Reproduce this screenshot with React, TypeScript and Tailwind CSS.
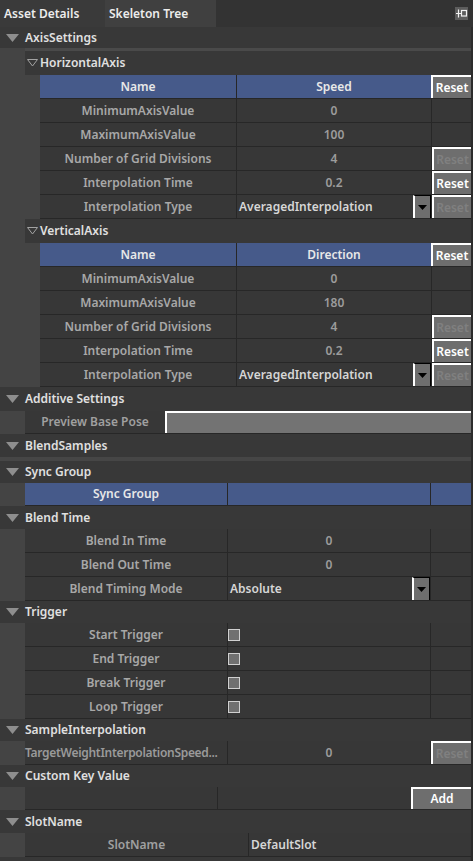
import React from 'react';

const Tri = () => (
  <svg width="13" height="8" viewBox="0 0 13 8">
    <polygon points="0,0 13,0 6.5,8" fill="#8e8e8e" />
  </svg>
);

const SubTri = () => (
  <svg width="11" height="8" viewBox="0 0 11 8">
    <polygon points="0.5,0.5 10.5,0.5 5.5,7" fill="none" stroke="#a3a3a3" />
  </svg>
);

const DockIcon = () => (
  <svg width="13" height="13" viewBox="0 0 13 13">
    <rect width="13" height="13" fill="#5d5d5d" />
    <path d="M3.5 2.5v8M1 6.5h6" stroke="#f2f2f2" strokeWidth="1.2" />
    <rect x="6.5" y="3.5" width="5" height="5.5" fill="none" stroke="#f2f2f2" strokeWidth="1.2" />
  </svg>
);

const Header = ({ title, h = 'h-[23px]' }: { title: string; h?: string }) => (
  <div className={`${h} flex items-center shrink-0`}>
    <div className="w-[25px] flex justify-center">
      <Tri />
    </div>
    <span className="text-[#e0e0e0] font-semibold">{title}</span>
  </div>
);

const ResetBtn = ({ disabled }: { disabled?: boolean }) => (
  <div
    className={`h-full w-full bg-[#6e6e6e] border-l-2 border-t-2 border-white flex items-center justify-center font-semibold ${
      disabled ? 'text-[#808080]' : 'text-white'
    }`}
  >
    Reset
  </div>
);

const Dropdown = () => (
  <div className="w-[18px] h-full bg-[#6e6e6e] border-l-2 border-l-white border-t border-t-black border-r border-r-black flex items-center justify-center">
    <svg width="9" height="5" viewBox="0 0 9 5">
      <polygon points="0,0 9,0 4.5,5" fill="#000" />
    </svg>
  </div>
);

type AxisRow = { label: string; value: string; reset?: 'on' | 'off'; dropdown?: boolean };

const AxisTable = ({ head, rows }: { head: string; rows: AxisRow[] }) => (
  <div className="flex">
    <div className="w-[15px] bg-[#444444]" />
    <div className="flex-1 flex flex-col">
      <div className="h-[24px] flex border-b border-[#272727]">
        <div className="w-[196px] bg-[#465a8a] flex items-center justify-center text-[#e8e8e8] font-semibold">Name</div>
        <div className="w-[195px] bg-[#465a8a] border-l border-[#272727] flex items-center justify-center text-[#e8e8e8] font-semibold">
          {head}
        </div>
        <div className="w-[40px]">
          <ResetBtn />
        </div>
      </div>
      {rows.map((r) => (
        <div key={r.label} className="h-[24px] flex border-b border-[#272727] bg-[#373737]">
          <div className="w-[196px] flex items-center justify-center text-[#a8a8a8] font-semibold">{r.label}</div>
          <div className="w-[195px] border-l border-[#272727] flex items-center">
            {r.dropdown ? (
              <div className="flex-1 h-full flex items-center justify-between pl-[2px]">
                <span className="text-[#d6d6d6] font-semibold">{r.value}</span>
                <Dropdown />
              </div>
            ) : (
              <span className="flex-1 text-center text-[#9c9c9c] font-semibold">{r.value}</span>
            )}
          </div>
          <div className="w-[40px] border-l border-[#272727]">
            {r.reset === 'on' && <ResetBtn />}
            {r.reset === 'off' && <ResetBtn disabled />}
          </div>
        </div>
      ))}
    </div>
  </div>
);

const SubHeader = ({ title }: { title: string }) => (
  <div className="h-[24px] flex items-center pl-[2px] bg-[#383838]">
    <SubTri />
    <span className="ml-[2px] text-[#e0e0e0] font-semibold">{title}</span>
  </div>
);

const Body = ({ children }: { children: React.ReactNode }) => (
  <div className="flex shrink-0">
    <div className="w-[25px] bg-[#444444]" />
    <div className="flex-1 flex flex-col">{children}</div>
  </div>
);

const axisRows = (max: string): AxisRow[] => [
  { label: 'MinimumAxisValue', value: '0' },
  { label: 'MaximumAxisValue', value: max },
  { label: 'Number of Grid Divisions', value: '4', reset: 'off' },
  { label: 'Interpolation Time', value: '0.2', reset: 'on' },
  { label: 'Interpolation Type', value: 'AveragedInterpolation', reset: 'off', dropdown: true },
];

const Row3 = ({
  label,
  children,
  last,
  left,
}: {
  label: string;
  children?: React.ReactNode;
  last?: React.ReactNode;
  left?: boolean;
}) => (
  <div className="h-[24px] flex border-b border-[#272727] bg-[#373737]">
    {left ? (
      <div className="w-[202px] flex items-center">
        <span className="whitespace-nowrap tracking-[-0.3px] text-[#9a9a9a] font-semibold">{label}</span>
      </div>
    ) : (
      <div className="w-[202px] flex items-center justify-center text-[#a8a8a8] font-semibold">{label}</div>
    )}
    <div className="w-[203px] border-l border-[#272727] flex items-center">{children}</div>
    <div className="w-[41px] border-l border-[#272727]">{last}</div>
  </div>
);

export default function App() {
  return (
    <div className="w-[473px] h-[861px] overflow-hidden bg-[#383838] flex flex-col text-[12px] leading-none font-['Noto_Sans',sans-serif]">
      {/* tab bar */}
      <div className="h-[27px] flex items-center bg-[#333333] shrink-0">
        <div className="w-[105px] h-full bg-[#3a3a3a] flex items-center pl-[4px] text-[#ececec] font-semibold">Asset Details</div>
        <div className="w-[111px] h-full bg-[#404040] flex items-center pl-[4px] text-[#ececec] font-semibold">Skeleton Tree</div>
        <div className="flex-1" />
        <div className="mr-[5px]">
          <DockIcon />
        </div>
      </div>

      <div className="flex flex-1">
        <div className="w-[471px] flex flex-col">
          <Header title="AxisSettings" h="h-[21px]" />
          <Body>
            <div className="h-[3px] bg-[#4a4a4a]" />
            <SubHeader title="HorizontalAxis" />
            <AxisTable head="Speed" rows={axisRows('100')} />
            <SubHeader title="VerticalAxis" />
            <AxisTable head="Direction" rows={axisRows('180')} />
          </Body>

          <Header title="Additive Settings" h="h-[24px]" />
          <Body>
            <div className="h-[23px] flex bg-[#373737] border-b border-[#272727]">
              <div className="w-[140px] flex items-center justify-center text-[#a0a0a0] font-semibold">Preview Base Pose</div>
              <div className="flex-1 bg-[#737373] border-l-2 border-t-2 border-white" />
            </div>
          </Body>

          <Header title="BlendSamples" />
          <div className="h-[4px] bg-[#464646] shrink-0" />

          <Header title="Sync Group" h="h-[22px]" />
          <Body>
            <div className="h-[23px] flex bg-[#465a8a] border-b border-[#272727]">
              <div className="w-[202px] flex items-center justify-center text-[#e8e8e8] font-semibold">Sync Group</div>
              <div className="w-[203px] border-l border-[#272727]" />
              <div className="w-[41px] border-l border-[#272727]" />
            </div>
          </Body>

          <Header title="Blend Time" />
          <Body>
            <Row3 label="Blend In Time">
              <span className="flex-1 text-center text-[#9c9c9c] font-semibold">0</span>
            </Row3>
            <Row3 label="Blend Out Time">
              <span className="flex-1 text-center text-[#9c9c9c] font-semibold">0</span>
            </Row3>
            <Row3 label="Blend Timing Mode">
              <div className="flex-1 h-full flex items-center justify-between pl-[2px]">
                <span className="text-[#d6d6d6] font-semibold">Absolute</span>
                <Dropdown />
              </div>
            </Row3>
          </Body>

          <Header title="Trigger" h="h-[22px]" />
          <Body>
            {['Start Trigger', 'End Trigger', 'Break Trigger', 'Loop Trigger'].map((t) => (
              <Row3 key={t} label={t}>
                <div className="w-[12px] h-[12px] bg-[#707070] border border-[#d0d0d0]" />
              </Row3>
            ))}
          </Body>

          <Header title="SampleInterpolation" h="h-[22px]" />
          <Body>
            <Row3 label="TargetWeightInterpolationSpeed..." left last={<ResetBtn disabled />}>
              <span className="flex-1 text-center text-[#9c9c9c] font-semibold">0</span>
            </Row3>
          </Body>

          <Header title="Custom Key Value" h="h-[22px]" />
          <Body>
            <div className="h-[23px] flex bg-[#373737] border-b border-[#272727]">
              <div className="w-[192px]" />
              <div className="flex-1 border-l border-[#272727] flex justify-end">
                <div className="w-[60px] h-full bg-[#6e6e6e] border-l-2 border-t-2 border-white flex items-center justify-center text-white font-semibold">
                  Add
                </div>
              </div>
            </div>
          </Body>

          <Header title="SlotName" />
          <Body>
            <div className="h-[24px] flex bg-[#373737] border-b border-[#272727]">
              <div className="w-[223px] flex items-center justify-center text-[#a0a0a0] font-semibold">SlotName</div>
              <div className="flex-1 border-l border-[#272727] flex items-center pl-[2px] text-[#d6d6d6] font-semibold">DefaultSlot</div>
            </div>
          </Body>
        </div>
        <div className="w-[2px] bg-[#2c2c2c]" />
      </div>
    </div>
  );
}
